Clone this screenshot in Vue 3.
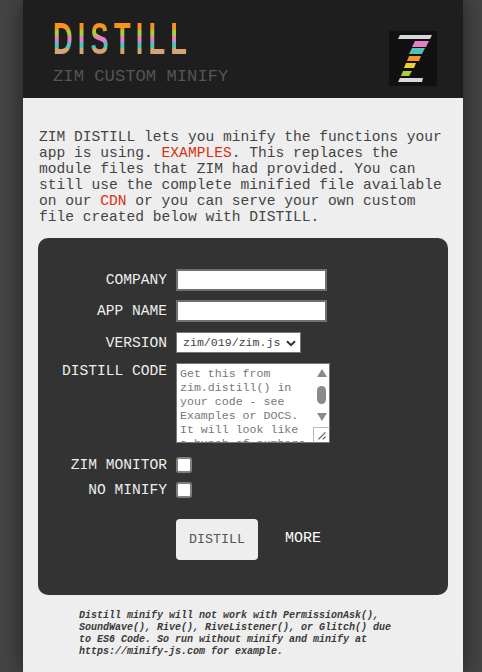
<template>
  <div class="page">
    <header class="top">
      <div class="brand">
        <h1 class="logo">DISTILL</h1>
        <div class="tagline">ZIM CUSTOM MINIFY</div>
      </div>
      <svg class="zlogo" width="48" height="55" viewBox="0 0 48 55">
        <rect width="48" height="55" fill="#111" />
        <polygon points="11,4 43,4 41,8 9,8" fill="#d8d8d8" />
        <polygon points="26,10 40,10 37,16 23,16" fill="#e67fc8" />
        <polygon points="23,17 36,17 33,23 20,23" fill="#4fc4b6" />
        <polygon points="20,25 32,25 30,30 18,30" fill="#f7941d" />
        <polygon points="17,32 27,32 25,37 15,37" fill="#ecd22f" />
        <polygon points="14,40 23,40 20,45 12,45" fill="#a8ce3c" />
        <polygon points="11,47 34,47 33,51 9,51" fill="#d8d8d8" />
      </svg>
    </header>

    <main class="content">
      <p class="intro">
        ZIM DISTILL lets you minify the functions your app is using.
        <a href="#">EXAMPLES</a>. This replaces the module files that ZIM had
        provided. You can still use the complete minified file available on our
        <a href="#">CDN</a> or you can serve your own custom file created below
        with DISTILL.
      </p>

      <form class="panel" @submit.prevent>
        <div v-for="field in textFields" :key="field" class="row">
          <label>{{ field }}</label>
          <input type="text" class="text" />
        </div>

        <div class="row version">
          <label>VERSION</label>
          <div class="select-wrap">
            <select v-model="version">
              <option>zim/019/zim.js</option>
            </select>
            <svg class="chevron" width="10" height="7" viewBox="0 0 10 7">
              <path d="M1 1.2 5 5.2 9 1.2" fill="none" stroke="#333" stroke-width="2" />
            </svg>
          </div>
        </div>

        <div class="row code">
          <label>DISTILL CODE</label>
          <div class="area-wrap">
            <textarea :placeholder="hint"></textarea>
            <div class="scroll">
              <i class="up"></i>
              <b></b>
              <i class="down"></i>
            </div>
            <svg class="grip" width="17" height="16" viewBox="0 0 17 16">
              <path d="M5 13 13 5M10 13 13 10" stroke="#555" stroke-width="1.3" fill="none" />
            </svg>
          </div>
        </div>

        <div class="row check">
          <label>ZIM MONITOR</label>
          <input type="checkbox" class="box" />
        </div>
        <div class="row check">
          <label>NO MINIFY</label>
          <input type="checkbox" class="box" />
        </div>

        <div class="actions">
          <button type="submit">DISTILL</button>
          <a href="#" class="more">MORE</a>
        </div>
      </form>

      <p class="note">
        Distill minify will not work with PermissionAsk(),<br />
        SoundWave(), Rive(), RiveListener(), or Glitch() due<br />
        to ES6 Code. So run without minify and minify at<br />
        https://minify-js.com for example.
      </p>
    </main>
  </div>
</template>

<script setup>
import { ref } from "vue";

const textFields = ["COMPANY", "APP NAME"];
const version = ref("zim/019/zim.js");
const hint =
  "Get this from zim.distill() in your code - see Examples or DOCS. It will look like a bunch of numbers";
</script>

<style>
html,
body {
  margin: 0;
  height: 100%;
  overflow: hidden;
  background: #444;
}
</style>

<style scoped>
.page {
  width: 440px;
  height: 672px;
  margin-left: 23px;
  background: #eee;
  box-shadow: 0 0 20px rgba(0, 0, 0, 0.5);
  font-family: "Liberation Mono", "Courier New", monospace;
  overflow: hidden;
}

.top {
  height: 98px;
  background: #1e1e1e;
  display: flex;
  justify-content: space-between;
  padding: 0 26px 0 31px;
  box-sizing: border-box;
}

.logo {
  margin: 23px 0 0 -1px;
  font-family: "Liberation Sans", Arial, sans-serif;
  font-size: 44px;
  line-height: 32px;
  font-weight: 700;
  letter-spacing: 8.3px;
  color: transparent;
  background: linear-gradient(
    #f7941d 0 21%,
    #a8ce3c 21% 41%,
    #e67fc8 41% 60%,
    #4fc4b6 60% 79%,
    #d4a574 79% 100%
  );
  background-clip: text;
  -webkit-background-clip: text;
  width: max-content;
  transform: scaleX(0.62);
  transform-origin: left;
}

.tagline {
  margin: 13px 0 0 -1px;
  font-size: 17.2px;
  line-height: 17px;
  color: #555;
}

.zlogo {
  margin-top: 31px;
}

.content {
  padding: 31px 15px 0;
}

.intro {
  margin: 0 0 0 1px;
  font-size: 14.6px;
  line-height: 16px;
  color: #444;
}

.intro a {
  color: #d9300f;
  text-decoration: none;
}

.panel {
  margin-top: 13px;
  height: 357px;
  box-sizing: border-box;
  padding: 31px 0 0;
  background: #333;
  border-radius: 10px;
}

.row {
  display: flex;
  align-items: center;
  gap: 9px;
  margin-bottom: 9px;
}

.row label {
  width: 129px;
  text-align: right;
  font-size: 14.6px;
  line-height: 16px;
  color: #eee;
}

.version {
  margin-top: 10px;
  margin-bottom: 10px;
}

.code {
  align-items: flex-start;
  margin-bottom: 14px;
}

.text {
  width: 151px;
  height: 22px;
  box-sizing: border-box;
  border: 2px solid #707070;
  background: #fff;
  padding: 0 4px;
}

.select-wrap {
  position: relative;
  width: 125px;
  height: 21px;
}

.select-wrap select {
  appearance: none;
  display: block;
  width: 100%;
  height: 100%;
  border: 1px solid #777;
  background: #fff;
  padding: 0 0 0 6px;
  font-family: inherit;
  font-size: 11.6px;
  color: #444;
  border-radius: 0;
}

.chevron {
  position: absolute;
  right: 5px;
  top: 8px;
  pointer-events: none;
}

.area-wrap {
  position: relative;
  width: 154px;
  height: 80px;
}

.area-wrap textarea {
  display: block;
  width: 100%;
  height: 100%;
  box-sizing: border-box;
  border: 1px solid #777;
  padding: 3px 20px 0 3px;
  margin: 0;
  background: #fff;
  font-family: inherit;
  font-size: 11.6px;
  line-height: 14px;
  overflow: hidden;
  resize: none;
}

.area-wrap textarea::placeholder {
  color: #777;
  opacity: 1;
}

.scroll {
  position: absolute;
  top: 6px;
  left: 140px;
  width: 11px;
  height: 52px;
  display: flex;
  flex-direction: column;
  align-items: center;
  justify-content: space-between;
}

.scroll b {
  width: 9px;
  height: 18px;
  border-radius: 5px;
  background: #8a8a8a;
}

.scroll i {
  width: 0;
  height: 0;
  border-left: 5.5px solid transparent;
  border-right: 5.5px solid transparent;
}

.scroll .up {
  border-bottom: 8px solid #8a8a8a;
}

.scroll .down {
  border-top: 8px solid #8a8a8a;
}

.grip {
  position: absolute;
  right: 0;
  bottom: 0;
  background: #fff;
  border-left: 1px solid #bbb;
  border-top: 1px solid #bbb;
  border-right: 1px solid #777;
  border-bottom: 1px solid #777;
  box-sizing: border-box;
}

.box {
  appearance: none;
  margin: 0;
  width: 16px;
  height: 16px;
  box-sizing: border-box;
  border: 2px solid #808080;
  border-radius: 3px;
  background: #fff;
}

.actions {
  display: flex;
  align-items: center;
  margin: 21px 0 0 138px;
}

.actions button {
  width: 82px;
  height: 41px;
  border: 0;
  border-radius: 4px;
  background: #eee;
  color: #555;
  font-family: inherit;
  font-size: 13.3px;
}

.more {
  margin: -2px 0 0 27px;
  color: #fff;
  font-size: 15px;
  text-decoration: none;
}

.note {
  margin: 15px 0 0 41px;
  font-size: 10px;
  line-height: 12px;
  font-style: italic;
  font-weight: 700;
  color: #3a3a3a;
}
</style>
